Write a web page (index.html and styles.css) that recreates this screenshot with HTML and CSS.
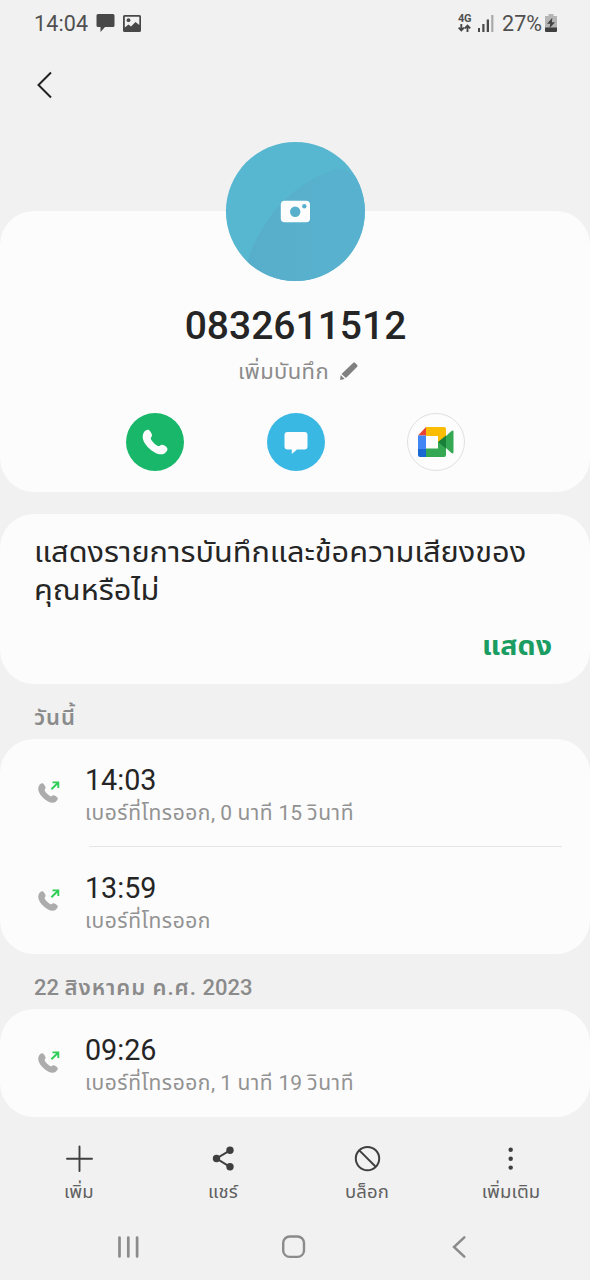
FILE: index.html
```html
<!DOCTYPE html>
<html lang="th">
<head>
<meta charset="utf-8">
<title>0832611512</title>
<link rel="stylesheet" href="styles.css">
</head>
<body>
<svg class="defs" width="0" height="0" aria-hidden="true">
  <symbol id="handset" viewBox="0 0 26 26"><path d="M1.800 3.500C3.500 1 5.600.2 7.200 1.300C8.700 2.700 10.300 5.200 10 6.800C9.700 8.100 8.500 8.700 8.900 10C9.700 12.300 14 16.500 16.300 17.100C17.700 17.500 18.300 16.100 19.800 15.800C21.300 15.700 24.400 17.500 25.200 19C26 20.700 24.900 22.800 22.500 24.400C20.100 25.800 16.500 25.500 13.200 23.700C7.800 20.600 3.100 15.800 1.400 11.400C.3 8.500.5 5.600 1.800 3.500Z"/></symbol>
  <symbol id="outgoing" viewBox="0 0 22 24"><use href="#handset" x="-.3" y="2.700" width="20.500" height="20.500" fill="#acacac"/><path d="M13.400 9.200 20 2.700M14.500 2.400H20.300V8" fill="none" stroke="#2fce57" stroke-width="1.900"/></symbol>
</svg>
<main class="screen">
  <header class="status">
    <span class="clock">14:04</span>
    <svg class="st-chat" width="19" height="19" viewBox="0 0 19 19"><path d="M2 0H17Q18.500 0 18.500 1.500V11.500Q18.500 13 17 13H9L4.500 18V13H2Q.5 13 .5 11.500V1.500Q.5 0 2 0Z"/></svg>
    <svg class="st-image" width="18" height="17" viewBox="0 0 18 17"><path fill-rule="evenodd" d="M1.500 0H16.500Q18 0 18 1.500V15.500Q18 17 16.500 17H1.500Q0 17 0 15.500V1.500Q0 0 1.500 0ZM1.800 1.700V12.500L5.500 9.500 8 11.500 12.500 7 16.300 10V1.700Z"/><circle cx="5.500" cy="5.200" r="1.900"/></svg>
    <span class="spacer"></span>
    <span class="net"><b>4G</b><svg width="13" height="8" viewBox="0 0 13 8"><path d="M3.300 0V6.500M.6 3.600 3.300 6.400 6 3.600M9.500 8V1.500M6.800 4.400 9.500 1.600 12.200 4.400" fill="none" stroke="#484848" stroke-width="1.900"/></svg></span>
    <svg class="signal" width="16" height="17" viewBox="0 0 16 17"><path d="M0 13H2V17H0ZM4.300 9H6.500V17H4.300ZM8.700 4.500H11V17H8.700Z"/><path d="M13.200 0H15.400V17H13.200Z" opacity=".42"/></svg>
    <span class="percent">27%</span>
    <svg class="battery" width="12" height="18" viewBox="0 0 12 18"><path d="M3.500 0H8.500V2H12V18H0V2H3.500Z" fill="#b5b5b5"/><path d="M0 13.500H12V16.500Q12 18 10.500 18H1.500Q0 18 0 16.500Z" fill="#3f3f3f"/><path d="M7.300 3.700 2 9.700H5.200L4.500 14.300 10 8.200H6.900Z" fill="#444"/></svg>
  </header>
  <nav class="topbar"><svg width="18" height="28" viewBox="0 0 18 28"><path d="M15 1.500 2.500 14 15 26.500" fill="none" stroke="#222" stroke-width="2"/></svg></nav>

  <section class="card profile">
    <svg class="avatar" width="140" height="140" viewBox="0 0 140 140">
      <defs>
        <clipPath id="disc"><circle cx="70.400" cy="70.500" r="69.500"/></clipPath>
        <linearGradient id="shade"><stop offset="0" stop-color="#57aecb"/><stop offset="1" stop-color="#58b2cf"/></linearGradient>
      </defs>
      <g clip-path="url(#disc)"><path d="M0 0H140V140H0Z" fill="#57b6d0"/><path d="M22 122C34 82 65 40 116 27L140 40V140H22Z" fill="url(#shade)"/></g>
      <rect x="55.800" y="59.800" width="29.200" height="21.500" rx="3.800" fill="#fdfdfd"/><circle cx="70.200" cy="70.700" r="5.200" fill="#58b0cd"/><circle cx="79.300" cy="65.300" r="2.200" fill="#58b0cd"/>
    </svg>
    <h1 class="number">0832611512</h1>
    <div class="note"><span>เพิ่มบันทึก</span><svg width="20" height="20" viewBox="0 0 20 20"><path d="M12.700 2.200 14.400.7Q15.200 0 16 .8L18.200 3Q19 3.900 18.200 4.700L7 16 2.500 11.900ZM1.700 13.100 5.700 16.900 1 18Z" fill="#808080"/></svg></div>
    <div class="actions">
      <span class="round call"><svg width="26" height="26"><use href="#handset" fill="#fcfcfc"/></svg></span>
      <span class="round message"><svg width="24" height="24" viewBox="0 0 24 24"><path d="M3.500 2H20.500Q23.500 2 23.500 5V16.500Q23.500 19.500 20.500 19.500H13L7.800 24V19.500H3.500Q.5 19.500 .5 16.500V5Q.5 2 3.500 2Z" fill="#fcfcfc"/></svg></span>
      <span class="round meet"><svg width="36" height="30" viewBox="0 0 36 30"><path d="M8 0H26Q28 0 28 2V12L20 15V9H8Z" fill="#fbbc04"/><path d="M0 8.500 8 0V8.500Z" fill="#e94235"/><path d="M0 8.500H8V22H0Z" fill="#4285f4"/><path d="M0 22H8V30H2Q0 30 0 28Z" fill="#1967d2"/><path d="M8 21.500H20V15L28 10V28Q28 30 26 30H8ZM28 9 33.500 4Q35.500 2.700 35.500 5V25Q35.500 27.300 33.500 26L28 21Z" fill="#34a853"/><path d="M20 15 28 8.500V21.500Z" fill="#188038"/></svg></span>
    </div>
  </section>

  <section class="card prompt">
    <p><span class="line">แสดงรายการบันทึกและข้อความเสียงของ</span><span class="line">คุณหรือไม่</span></p>
    <button class="show" type="button">แสดง</button>
  </section>

  <h2 class="day"><span class="th">วันนี้</span></h2>
  <section class="card log">
    <article class="entry"><svg class="kind" width="22" height="24"><use href="#outgoing"/></svg><div class="detail"><time>14:03</time><span class="sub"><span class="th">เบอร์ที่โทรออก</span>, 0 <span class="th">นาที</span> 15 <span class="th">วินาที</span></span></div></article>
    <article class="entry second"><svg class="kind" width="22" height="24"><use href="#outgoing"/></svg><div class="detail"><time>13:59</time><span class="sub"><span class="th">เบอร์ที่โทรออก</span></span></div></article>
  </section>
  <h2 class="day">22 <span class="th">สิงหาคม ค.ศ.</span> 2023</h2>
  <section class="card log">
    <article class="entry"><svg class="kind" width="22" height="24"><use href="#outgoing"/></svg><div class="detail"><time>09:26</time><span class="sub"><span class="th">เบอร์ที่โทรออก</span>, 1 <span class="th">นาที</span> 19 <span class="th">วินาที</span></span></div></article>
  </section>

  <nav class="tools">
    <a class="tool"><svg width="28" height="28" viewBox="0 0 28 28"><path d="M14.500 1.500V26M2 13.700H27" fill="none" stroke="#3f3f3f" stroke-width="1.900" stroke-linecap="round"/></svg><span>เพิ่ม</span></a>
    <a class="tool"><svg width="28" height="28" viewBox="0 0 28 28"><path d="M21 5.300 7.500 13.500 21 21.800" fill="none" stroke="#3f3f3f" stroke-width="2"/><g fill="#3f3f3f"><circle cx="7.500" cy="13.500" r="3.700"/><circle cx="21" cy="5.300" r="3.700"/><circle cx="21" cy="21.800" r="3.700"/></g></svg><span>แชร์</span></a>
    <a class="tool"><svg width="28" height="28" viewBox="0 0 28 28"><circle cx="14.500" cy="13.600" r="11.700" fill="none" stroke="#3f3f3f" stroke-width="2"/><path d="M6.300 5.400 22.700 21.800" stroke="#3f3f3f" stroke-width="2"/></svg><span>บล็อก</span></a>
    <a class="tool"><svg width="28" height="28" viewBox="0 0 28 28" fill="#3f3f3f"><circle cx="13.700" cy="4.700" r="2.200"/><circle cx="13.700" cy="13.700" r="2.200"/><circle cx="13.700" cy="22.600" r="2.200"/></svg><span>เพิ่มเติม</span></a>
  </nav>
  <nav class="system">
    <svg width="24" height="24" viewBox="0 0 24 24"><path d="M3.500 2.500V21.500M12.300 2.500V21.500M21.100 2.500V21.500" fill="none" stroke="#8b8b8b" stroke-width="2.700" stroke-linecap="round"/></svg>
    <svg width="24" height="24" viewBox="0 0 24 24"><rect x="1.200" y="1.500" width="20.800" height="20.400" rx="6.500" fill="none" stroke="#8b8b8b" stroke-width="2.400"/></svg>
    <svg width="24" height="24" viewBox="0 0 24 24"><path d="M17.300 2.300 7 12 17.300 21.700" fill="none" stroke="#8b8b8b" stroke-width="2.500" stroke-linecap="round"/></svg>
  </nav>
</main>
</body>
</html>
```
FILE: styles.css
```css
* { box-sizing: border-box; }
body { margin: 0; background: #f1f1f1; color: #252525; font-family: Roboto, "Noto Sans Thai", "Noto Sans", sans-serif; }
svg { display: block; flex: none; }
h1, h2, p { margin: 0; }
.defs { position: absolute; }
.screen { width: 590px; height: 1280px; overflow: hidden; display: flex; flex-direction: column; }
.status { height: 46px; flex: none; display: flex; align-items: center; padding: 0 33px 0 34px; color: #505050; fill: #484848; }
.clock { font-size: 21.500px; letter-spacing: .15px; width: 62px; white-space: nowrap; }
.st-chat { margin-right: 8px; }
.spacer { flex: 1; }
.net { width: 14px; margin-right: 6px; }
.net b { display: block; font-size: 11px; line-height: 10px; letter-spacing: -.4px; }
.percent { font-size: 21.500px; margin: 0 3px 0 8px; }
.topbar { height: 165px; flex: none; padding: 25px 0 0 36px; }
.card { flex: none; background: #fcfcfc; border-radius: 34px; }
.profile { height: 281px; display: flex; flex-direction: column; align-items: center; }
.avatar { margin-top: -70px; }
.number { margin-top: 22px; padding-left: 1px; font-weight: 500; font-size: 39px; line-height: 46px; }
.note { height: 28px; margin-top: 9px; padding-left: 7px; display: flex; align-items: center; gap: 10px; color: #8b8b8b; font-size: 22px; letter-spacing: .4px; }
.actions { width: 339px; margin: 27px 0 0 1px; display: flex; justify-content: space-between; }
.round { width: 58px; height: 58px; border-radius: 50%; display: grid; place-items: center; }
.call { background: #18b76a; }
.message { background: #39b8e3; }
.meet { border: 1px solid #e0e0e3; background: #fdfdfd; }
.prompt { margin-top: 22px; height: 170px; padding: 20px 38px 0 34px; display: flex; flex-direction: column; }
.line { display: block; font-size: 28px; line-height: 38px; white-space: nowrap; transform: scaleX(1.095); transform-origin: left; }
.show { align-self: flex-end; margin-top: 19px; border: 0; padding: 0; background: none; color: #1b9c62; font: 700 27px/34px Roboto, "Noto Sans Thai", sans-serif; transform: scaleX(1.060); transform-origin: right; }
.day { flex: none; height: 55px; padding-left: 34px; font-size: 22px; line-height: 67px; font-weight: 500; color: #8b8b8b; white-space: nowrap; }
.day .th { font-weight: 600; letter-spacing: .95px; }
.entry { height: 108px; display: flex; padding: 25px 0 0 38px; }
.second { background: linear-gradient(#e5e5e5, #e5e5e5) 89px 0 / 473px 1px no-repeat; margin-top: -1px; padding-top: 26px; }
.kind { margin-top: 16px; }
.detail { margin-left: 25px; display: flex; flex-direction: column; }
time { font-size: 28.700px; line-height: 32px; }
.sub { font-size: 21px; line-height: 30px; margin-top: 2px; color: #929292; white-space: nowrap; }
.sub .th { letter-spacing: .55px; }
.tools { height: 97px; flex: none; padding: 28px 7px 0; display: grid; grid-template-columns: repeat(4, 1fr); }
.tool { display: flex; flex-direction: column; align-items: center; font-size: 18.500px; line-height: 26px; letter-spacing: .15px; color: #606060; gap: 6px; }
.system { flex: 1; padding: 21px 119px 0 116px; display: flex; justify-content: space-between; }
```
